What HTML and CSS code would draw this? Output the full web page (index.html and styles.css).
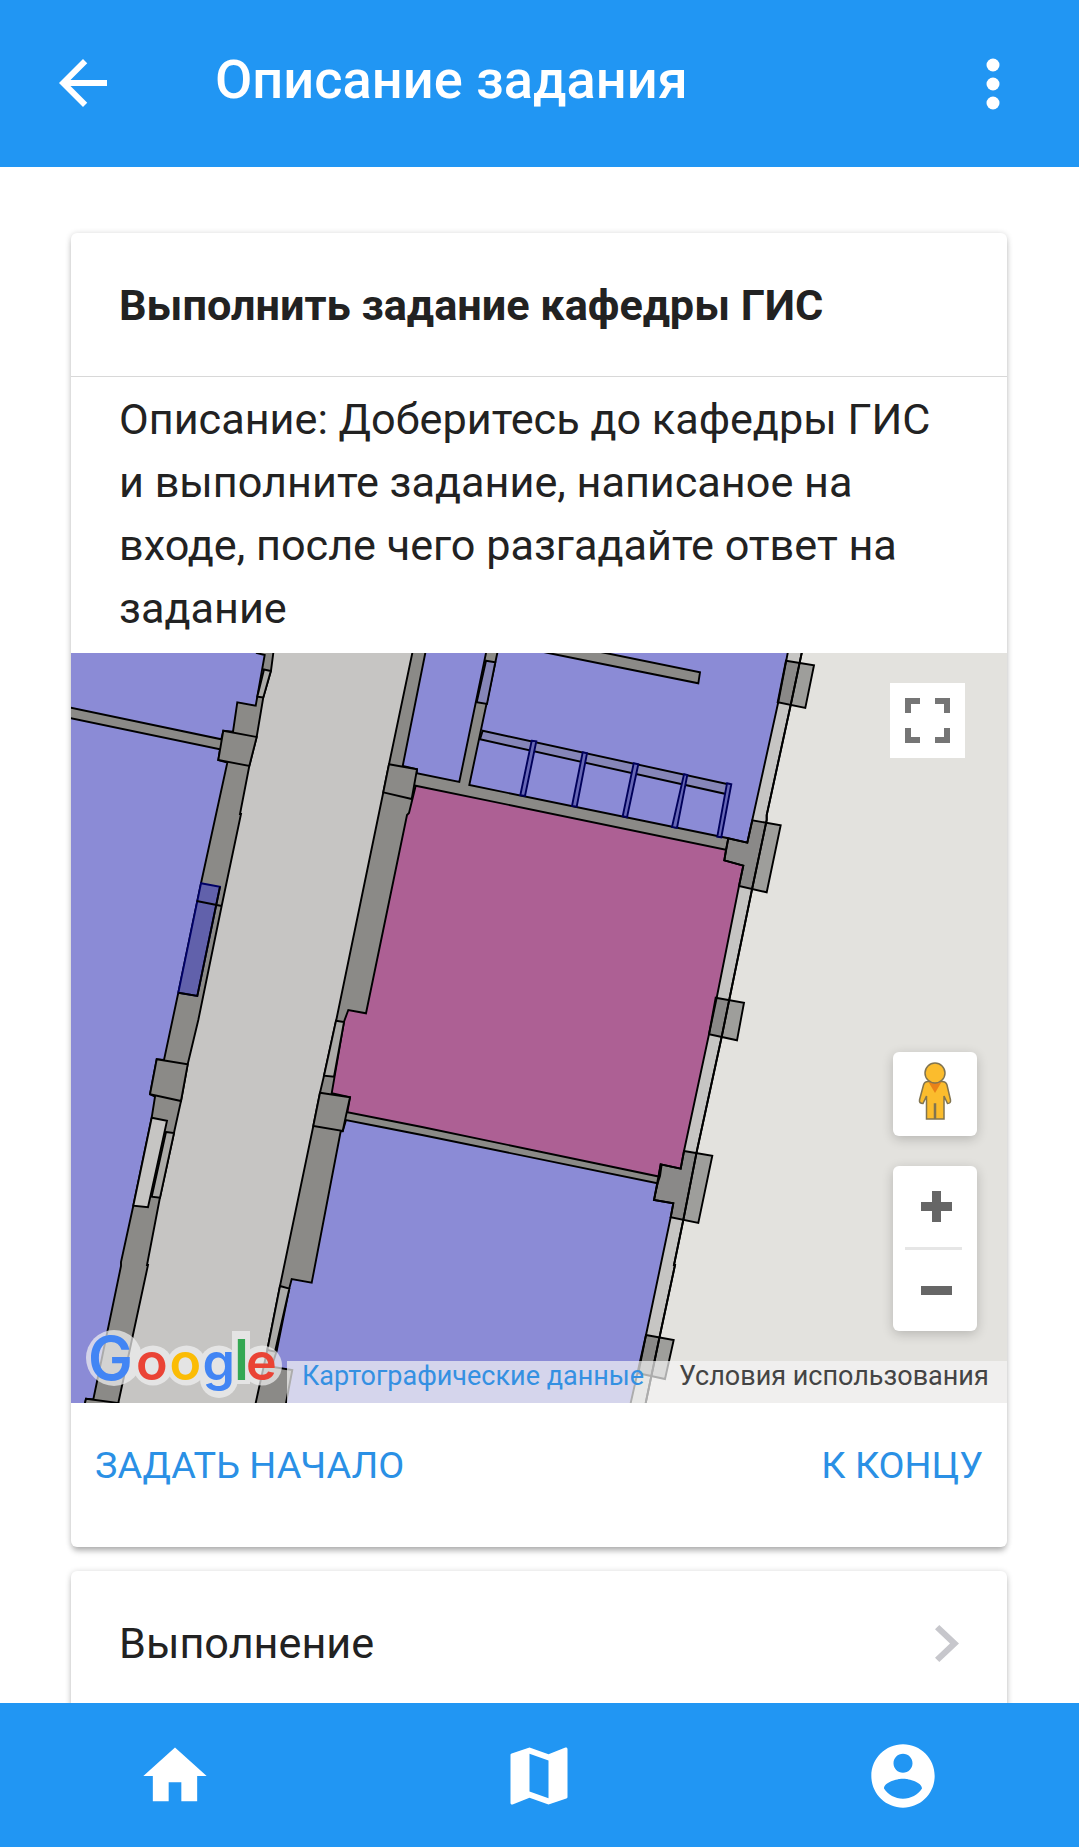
FILE: index.html
```html
<!DOCTYPE html>
<html lang="ru">
<head>
<meta charset="utf-8">
<title>Описание задания</title>
<link rel="stylesheet" href="styles.css">
</head>
<body>
<div class="app">
  <header class="topbar">
    <svg class="back" viewBox="0 0 24 24"><path d="M20 11H7.830l5.590-5.590L12 4l-8 8 8 8 1.410-1.410L7.830 13H20v-2z"/></svg>
    <h1 class="topbar-title"><span>Описание задания</span></h1>
    <svg class="more" viewBox="0 0 24 24"><circle cx="12" cy="6" r="2.05"/><circle cx="12" cy="12" r="2.05"/><circle cx="12" cy="18" r="2.05"/></svg>
  </header>

  <main class="content">
    <section class="card task">
      <h2 class="card-title"><span>Выполнить задание кафедры ГИС</span></h2>
      <p class="card-text">Описание: Доберитесь до кафедры ГИС и выполните задание, написаное на входе, после чего разгадайте ответ на задание</p>

      <div class="map">
        <svg class="plan" viewBox="71 653 936 750">
          <!-- building slab -->
          <path class="slab" d="M60 640H804.500L801.700 653 790.700 705 766.700 815V820L752.300 888 729.200 1000 721.700 1036.700 696.700 1151.700 683.300 1220 674 1265H675L659.300 1338.300 645.700 1403 643 1415H60Z"/>
          <!-- left walls -->
          <path class="wall" d="M60 640H274L273.300 653 271 670.700 263.300 697.300 256.700 736.700 249.300 766 240 814H241L221.700 905.700 198.300 1020 187.700 1064.300 181 1101 174 1132.700 160 1197.300 147 1265H148L118.300 1403 116 1415H60Z"/>
          <!-- central walls -->
          <path class="wall" d="M415 640L412.300 653 389 764.300 383.300 792.300 336.700 1018 324 1075.700 320 1092.700 313.300 1126 280 1286 267.300 1350 255.700 1403 253 1415H286 600L657.700 1183 660 1176 700 900 726 849.700 728.300 838.300 740 640Z"/>
          <!-- rooms -->
          <path class="room" d="M60 640H253L256.700 653 264.700 655 255.700 705.700 237.300 702.300 233 731.700 223.300 730.700 221.300 739.300 60 705.500Z"/>
          <path class="room" d="M60 716L220 749.300 218.300 760 227.300 762.700 201 883.300 178.300 992.700 164 1060 156.700 1059.300 150 1094.300 155 1096.700 151.700 1117.700 133.300 1205.700 121 1262V1266L93.300 1399.500 86 1398.700 83 1415H60Z"/>
          <path class="room" d="M428 640L425.300 653 402.700 766 417 769.300 416.700 773.300 459.300 782 486 653 489 640Z"/>
          <path class="room" d="M500 640L497.300 653 469.300 785 728.300 838.300 747.300 842.700 752.300 820 778.300 702 787.700 653 790 640Z"/>
          <path class="room" d="M346 1120L342.700 1131.300H340.700L311.700 1282.700 291.700 1279 289.300 1288.300 276.700 1350.700 271.700 1366.700 292.300 1370 286 1403V1415H628L630.700 1403 646 1335 670.700 1217.300 673.300 1203.300 654 1200 657.500 1183.300 422 1135 380 1126.700Z"/>
          <path class="target" d="M415.700 785.700L726 849.700 724.300 860.300 743.300 865.700 739 886 716.700 997.700 709 1034.300 684 1151 680.700 1168.700 660.700 1164.300 658.700 1176.500 422 1127 347.300 1112.300 350 1097.300 331.700 1093.300 344 1021.700 348.300 1010 366 1013.300 407 815 409 813Z"/>
          <!-- pillars -->
          <path class="pillar" d="M786 660.700L814 665.300 805.300 708 777.700 702.300Z"/>
          <path class="pillar" d="M747.300 842.700L752.300 820.300 780.700 825.300 766.700 892.300 739 886 743.300 865.700 724.300 860.300 728.300 838.300Z"/>
          <path class="pillar" d="M715.700 997.700L744 1002.700 737 1040.300 709 1034.300Z"/>
          <path class="pillar" d="M684 1151L712.300 1155.700 698.300 1223 670.700 1217.300 673.300 1203.300 654 1200 660.700 1164.300 680.700 1168.700Z"/>
          <path class="pillar" d="M646 1335L673.700 1340 665 1379 638.300 1373.300Z"/>
          <path class="wall" d="M223.300 730.700L256.700 737 249.300 766 218.300 760ZM156.700 1059.300L187.700 1064.300 181 1101 150 1094.300ZM389 764.300L417 769.300 411.700 799 383.300 792.300ZM320 1092.700L350 1097.300 342.700 1131 313.300 1126Z"/>
          <path class="wall" d="M86 1398.700L118.300 1403 116 1415H82Z"/>
          <!-- doorways -->
          <path class="door" d="M264 669.500L270.800 671 263.300 697.500 257.300 696.700ZM336 1020.700L344 1022 334 1076.700 324 1075.700ZM280 1286L289.300 1288.700 275 1351.700 267.300 1350ZM166 1132L174 1133 160 1197.700 151.700 1196.700Z"/>
          <path class="niche" d="M151.700 1117.700L167 1120.700 148 1207.300 133.300 1205.700Z"/>
          <path class="shaft" d="M201 883.300L220 886.700 197.300 996 178.300 992.700Z"/>
          <path class="line" d="M196.700 901L221.700 906M178.300 992.700L197.300 996 220 886.700"/>
          <path class="tint" d="M486 660.700L495.300 662.300 487 704 476.700 702.300Z"/>
          <!-- partitions -->
          <path class="wall" d="M534 650L548.300 653 698.300 683.300 700 672.300 605.700 653 590 650Z"/>
          <path class="tint" d="M482.700 730.700L728.300 784.300 726 794 480 739.300Z"/>
          <path class="stall" d="M531.700 740.700L536.300 741.300 525 796 520.300 795.300ZM582.700 752.300L587 753.300 576.700 806.700 572 806ZM633.700 763.300L638.300 764.300 627 817.300 622.700 816.300ZM684 774.300L687.300 775 677 828 672 827ZM727 783.300L731.300 784.300 721.300 837.300 717.300 836.700Z"/>
          <!-- outer facade -->
          <path class="line" d="M804.500 640L801.700 653 790.700 705 766.700 815V820L752.300 888 729.200 1000 721.700 1036.700 696.700 1151.700 683.300 1220 674 1265H675L659.300 1338.300 645.700 1403"/>
        </svg>

        <div class="fullscreen">
          <svg viewBox="0 0 45 45"><path d="M0 15V0H15V6H6V15ZM30 0H45V15H39V6H30ZM0 30H6V39H15V45H0ZM39 30H45V45H30V39H39Z"/></svg>
        </div>

        <div class="controls">
          <div class="pegman">
            <svg viewBox="0 0 34 60"><path class="body" d="M10 19.500H24Q28 19.500 29 23L32.500 38Q33 41.500 29.500 41.500L26 34V57H17.500V42H16.500V57H8.500V34L5 41.500Q1 41.500 1.500 38L5.500 23Q6.500 19.500 10 19.500Z"/><path class="collar" d="M10.500 20H23.500L17 31Z"/><circle class="body" cx="17" cy="11" r="10"/></svg>
          </div>
          <div class="zoom">
            <svg viewBox="0 0 84 165"><path class="sign" d="M39 25H48V36H59V45H48V56H39V45H28V36H39ZM28 120H59V129H28Z"/><path class="rule" d="M12 81H69V84H12Z"/></svg>
          </div>
        </div>

        <svg class="logo" viewBox="0 0 220 85">
          <g class="halo"><circle cx="40" cy="40" r="28"/><circle cx="79" cy="47.500" r="20"/><circle cx="112.500" cy="47.500" r="20"/><circle cx="145" cy="47.500" r="20"/><circle cx="145" cy="61" r="19"/><rect x="158" y="13" width="18" height="53"/><circle cx="188" cy="47.500" r="20"/></g>
          <text class="b cap" x="14" y="62">G</text><text class="r" x="62" y="62">o</text><text class="y" x="95.500" y="62">o</text><text class="b" x="128.500" y="62">g</text><text class="g stem" x="160" y="62">l</text><text class="r" x="172" y="62">e</text>
        </svg>

        <div class="legal"><a class="data"><span>Картографические данные</span></a><a class="terms"><span>Условия использования</span></a></div>
      </div>

      <div class="actions"><a><span>ЗАДАТЬ НАЧАЛО</span></a><a><span>К КОНЦУ</span></a></div>
    </section>

    <section class="card item">
      <span>Выполнение</span>
      <svg viewBox="0 0 24 37"><path d="M0 4.300L4.300 0 24 18.500 4.300 37 0 32.700 15 18.500Z"/></svg>
    </section>
  </main>

  <nav class="tabbar">
    <svg viewBox="0 0 24 24"><path d="M10 20v-6h4v6h5v-8h3L12 3 2 12h3v8z"/></svg>
    <svg viewBox="0 0 24 24"><path d="M20.500 3l-.16.030L15 5.100 9 3 3.360 4.900c-.21.070-.36.250-.36.480V20.500c0 .28.220.5.500.5l.16-.030L9 18.900l6 2.100 5.640-1.900c.21-.070.360-.25.360-.48V3.500c0-.28-.22-.5-.5-.5zM15 19l-6-2.110V5l6 2.110V19z"/></svg>
    <svg viewBox="0 0 24 24"><path d="M12 2C6.480 2 2 6.480 2 12s4.480 10 10 10 10-4.480 10-10S17.520 2 12 2zm0 3c1.660 0 3 1.340 3 3s-1.340 3-3 3-3-1.340-3-3 1.340-3 3-3zm0 14.200c-2.500 0-4.710-1.280-6-3.220.030-1.990 4-3.080 6-3.080 1.990 0 5.970 1.090 6 3.080-1.290 1.940-3.500 3.220-6 3.220z"/></svg>
  </nav>
</div>
</body>
</html>
```
FILE: styles.css
```css
* { box-sizing: border-box; }
body { margin: 0; font-family: Roboto, sans-serif; color: #222; background: #fff; }
svg { display: block; flex: none; }

.app { height: 1847px; display: flex; flex-direction: column; overflow: hidden; }

.topbar { flex: none; height: 167px; padding: 0 48px 0 47px; display: flex; align-items: center; background: #2196f3; color: #fff; }
.topbar svg { fill: #fff; }
.back { width: 72px; height: 72px; margin-bottom: 1px; }
.topbar-title { flex: 1; margin: 0 0 8px 96px; font-size: 54.2px; line-height: 64px; font-weight: 500; white-space: nowrap; }
.more { width: 76px; height: 76px; }

.content { flex: 1; min-height: 0; overflow: hidden; padding: 66px 72px 0 71px; display: flex; flex-direction: column; gap: 24px; }
.card { flex: none; background: #fff; border-radius: 6px; overflow: hidden; box-shadow: 0 6px 6px -2px rgba(0, 0, 0, .22), 0 1px 6px rgba(0, 0, 0, .2); }
.task { height: 1314px; }
.card-title { margin: 0; height: 144px; padding: 0 48px; border-bottom: 1px solid #d8d8d8; font-size: 43.25px; line-height: 145px; font-weight: 700; white-space: nowrap; }
.card-text { margin: 0; height: 276px; padding: 11px 48px 0; font-size: 43.2px; line-height: 63px; }

.map { position: relative; height: 750px; overflow: hidden; background: #e3e2de; }
.plan { width: 936px; height: 750px; }
.plan path { stroke: #000; stroke-width: 1.900px; }
.slab { fill: #c6c5c3; }
.wall { fill: #8b8a87; }
.room { fill: #8b8bd6; }
.target { fill: #ad6094; }
.pillar { fill: rgba(0, 0, 0, .3); }
.door { fill: #acaba8; }
.niche { fill: #c6c5c3; }
.shaft { fill: #6161ab; }
.tint { fill: #8686b8; }
.plan .shaft { stroke: #000066; }
.plan .stall { fill: #6767b6; stroke: #00005a; }
.plan .line { fill: none; }

.fullscreen { position: absolute; top: 30px; right: 42px; width: 75px; height: 75px; padding: 15px; background: #fff; }
.fullscreen svg { width: 45px; height: 45px; fill: #757575; }
.controls { position: absolute; right: 30px; bottom: 72px; display: flex; flex-direction: column; gap: 30px; }
.pegman, .zoom { width: 84px; background: #fff; border-radius: 6px; box-shadow: 0 3px 12px rgba(0, 0, 0, .2); }
.pegman { height: 84px; padding: 10px 25px; }
.pegman svg { width: 34px; height: 60px; }
.body { fill: #fbbc2d; stroke: #817450; stroke-width: 1.500px; }
.collar { fill: #e98218; }
.zoom svg { width: 84px; height: 165px; }
.sign { fill: #666; }
.rule { fill: #e6e6e6; }

.logo { position: absolute; left: 3px; bottom: 0; width: 220px; height: 85px; font: 600 52px Inter, sans-serif; }
.logo .cap { font-size: 60px; }
.logo .stem { font-size: 57px; }
.halo { fill: #f2f2f2; opacity: .7; }
.b { fill: #4285f4; }
.r { fill: #ea4335; }
.y { fill: #fbbc05; }
.g { fill: #34a853; }

.legal { position: absolute; right: 0; bottom: 0; width: 720px; height: 42px; display: flex; font-size: 27px; line-height: 30px; white-space: nowrap; }
.legal a { background: rgba(245, 245, 245, .7); }
.data { width: 376px; padding-left: 15px; color: #3490e2; }
.terms { flex: 1; padding-left: 16px; color: #444; }

.actions { height: 143px; padding: 0 24px 20px 24px; display: flex; justify-content: space-between; align-items: center; font-size: 37.800px; color: #2a90e5; }
.item { height: 180px; padding: 0 48px 36px; display: flex; justify-content: space-between; align-items: center; font-size: 43.2px; }
.item svg { width: 24px; height: 37px; fill: #c7c7cc; }

.tabbar { flex: none; height: 144px; padding: 2px 1px 0 0; display: grid; grid-template-columns: 350px 1fr 350px; place-items: center; background: #2196f3; }
.tabbar svg { width: 76px; height: 76px; fill: #fff; }
```
